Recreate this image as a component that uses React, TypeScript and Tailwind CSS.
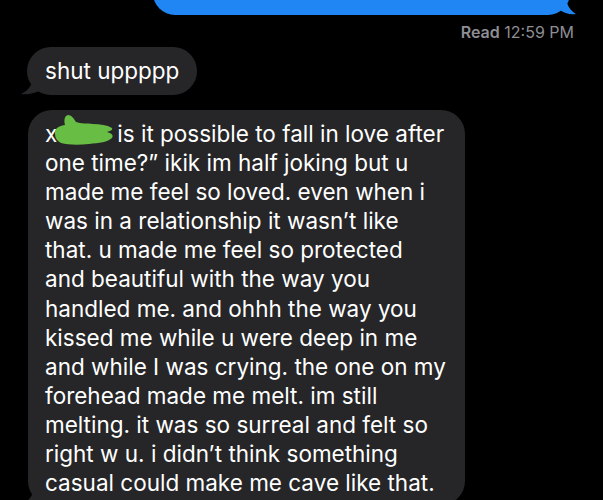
const lines = [
  "one time?\u201d ikik im half joking but u",
  "made me feel so loved. even when i",
  "was in a relationship it wasn\u2019t like",
  "that. u made me feel so protected",
  "and beautiful with the way you",
  "handled me. and ohhh the way you",
  "kissed me while u were deep in me",
  "and while I was crying. the one on my",
  "forehead made me melt. im still",
  "melting. it was so surreal and felt so",
  "right w u. i didn\u2019t think something",
  "casual could make me cave like that.",
]

function TailLeft() {
  return (
    <svg className="absolute left-[-8px] bottom-0" width="22" height="20" viewBox="0 0 22 20">
      <path d="M22 0 H14 C14 8 11 15 2 19 C9 20 17 18 22 15 Z" fill="#262628" />
    </svg>
  )
}

export default function App() {
  return (
    <div
      className="w-full h-[500px] bg-black overflow-hidden flex flex-col"
      style={{ fontFamily: "Inter, 'Noto Sans', sans-serif" }}
    >
      {/* outgoing bubble, mostly scrolled off */}
      <div className="self-end mr-[33px] mt-[-30px] relative">
        <div className="w-[417px] h-[45px] bg-[#1f86f4] rounded-[22px] px-[17px] pt-[1px] text-white text-[22.5px] leading-[29px] whitespace-nowrap overflow-hidden">
          <span className="pl-[217px]">y</span>
          <span className="pl-[113px]">g</span>
        </div>
        <svg className="absolute right-[-12px] bottom-0" width="22" height="20" viewBox="0 0 22 20">
          <path d="M0 0 H6 C6 8 9 15 16 19 C10 20 4 18 0 15 Z" fill="#1f86f4" />
        </svg>
      </div>

      {/* read receipt */}
      <div className="self-end mr-[29px] mt-[8px] text-[16px] text-[#8e8e93] leading-[18px]">
        <span className="font-semibold">Read</span> 12:59 PM
      </div>

      {/* short incoming bubble */}
      <div className="self-start ml-[27px] mt-[6px] relative">
        <div className="bg-[#262628] rounded-[24px] px-[18px] h-[48px] flex items-center text-white text-[22.5px]">
          shut uppppp
        </div>
        <TailLeft />
      </div>

      {/* long incoming bubble */}
      <div className="self-start ml-[28px] mt-[15px] relative">
        <div className="w-[437px] bg-[#262628] rounded-[24px] pl-[17px] pr-[14px] pt-[9px] pb-[8px] text-white text-[22.5px] leading-[29.1px] whitespace-nowrap relative">
          <div>
            <span>x</span>
            <span className="inline-block w-[60px]"></span>
            is it possible to fall in love after
          </div>
          {lines.map((line) => (
            <div key={line}>{line}</div>
          ))}
          <svg className="absolute left-[25px] top-[4px]" width="62" height="32" viewBox="0 0 62 32">
            <path
              d="M3 15 C6 12 10 11 12 11 C11 7 11 2 15 1 C19 1 21 5 23 8 C28 10 34 9 40 10 C47 10 54 11 59 14 C60 16 57 17 54 18 C58 19 61 21 59 24 C55 28 46 29 36 30 C26 31 15 31 8 29 C4 27 2 24 2 20 C2 18 2 16 3 15 Z"
              fill="#68bd45"
            />
          </svg>
        </div>
        <TailLeft />
      </div>
    </div>
  )
}
